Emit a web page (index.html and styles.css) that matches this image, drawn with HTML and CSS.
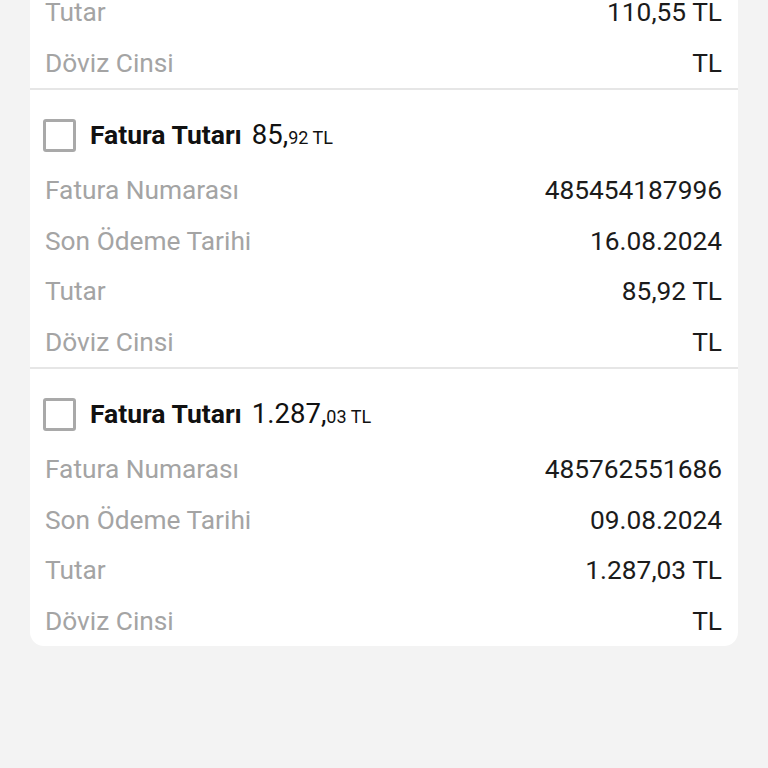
FILE: index.html
```html
<!DOCTYPE html>
<html lang="tr">
<head>
    <meta charset="UTF-8">
    <meta name="viewport" content="width=device-width, initial-scale=1.0">
    <title>Faturalar</title>
    <link rel="stylesheet" href="styles.css">
</head>
<body>
<div class="page">
    <div class="card">
        <div class="bill bill-partial">
            <div class="row"><span class="label">Tutar</span><span class="value">110,55 TL</span></div>
            <div class="row"><span class="label">Döviz Cinsi</span><span class="value">TL</span></div>
        </div>

        <div class="bill">
            <label class="bill-head">
                <span class="check"></span>
                <span class="head-title">Fatura Tutarı</span>
                <span class="head-amount">85,<small>92 TL</small></span>
            </label>
            <div class="row"><span class="label">Fatura Numarası</span><span class="value">485454187996</span></div>
            <div class="row"><span class="label">Son Ödeme Tarihi</span><span class="value">16.08.2024</span></div>
            <div class="row"><span class="label">Tutar</span><span class="value">85,92 TL</span></div>
            <div class="row"><span class="label">Döviz Cinsi</span><span class="value">TL</span></div>
        </div>

        <div class="bill">
            <label class="bill-head">
                <span class="check"></span>
                <span class="head-title">Fatura Tutarı</span>
                <span class="head-amount">1.287,<small>03 TL</small></span>
            </label>
            <div class="row"><span class="label">Fatura Numarası</span><span class="value">485762551686</span></div>
            <div class="row"><span class="label">Son Ödeme Tarihi</span><span class="value">09.08.2024</span></div>
            <div class="row"><span class="label">Tutar</span><span class="value">1.287,03 TL</span></div>
            <div class="row"><span class="label">Döviz Cinsi</span><span class="value">TL</span></div>
        </div>
    </div>
</div>
</body>
</html>
```

FILE: styles.css
```css
html,
body {
    margin: 0;
    height: 100%;
    background: #f3f3f3;
    font-family: Roboto, "Noto Sans", sans-serif;
}

.page {
    padding: 0 30px;
}

.card {
    /* listenin üstü kaydırılmış durumda */
    margin-top: -13px;
    background: #fff;
    border-radius: 0 0 14px 14px;
    overflow: hidden;
}

.bill {
    padding: 0 16px 0 15px;
    border-top: 2px solid #e6e6e6;
}
.bill-partial {
    border-top: none;
}

.bill-head {
    display: flex;
    align-items: baseline;
    height: 60px;
    margin-top: 15px;
    color: #111;
    line-height: 60px;
}

.check {
    align-self: center;
    width: 27px;
    height: 27px;
    margin-left: -2px;
    margin-right: 14px;
    border: 3px solid #a9a9a9;
    border-radius: 3px;
    flex-shrink: 0;
}

.head-title {
    font-size: 26.5px;
    font-weight: 700;
    margin-right: 10px;
}

.head-amount {
    font-size: 27.5px;
}
.head-amount small {
    font-size: 18px;
}

.row {
    display: flex;
    justify-content: space-between;
    align-items: center;
    height: 50.5px;
    font-size: 26.3px;
}

.label {
    color: #a4a4a4;
}

.value {
    color: #1b1b1b;
}
```
